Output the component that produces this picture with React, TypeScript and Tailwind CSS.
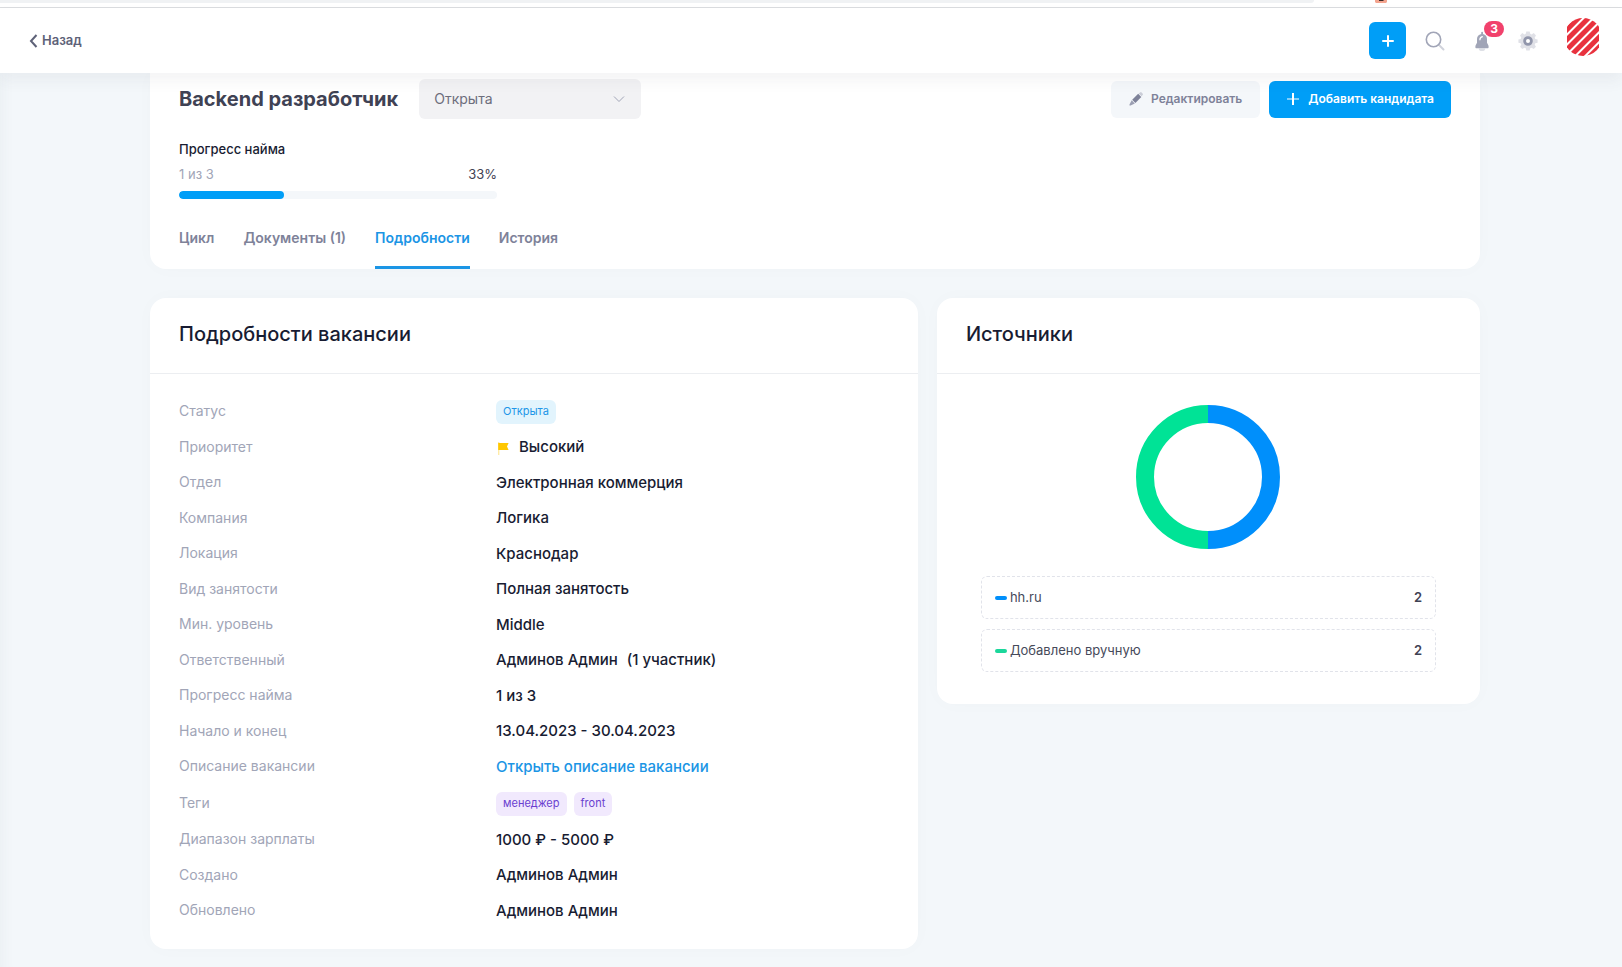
import React, { useState } from "react";

// Tabs of the vacancy page
const tabs = ["Цикл", "Документы (1)", "Подробности", "История"];

// Sources shown in the chart and its legend
const sources = [
  { name: "hh.ru", count: 2, dot: "bg-[#008ffb]" },
  { name: "Добавлено вручную", count: 2, dot: "bg-[#1bd79b]" },
];

// Rows of the details card, rows with badges are a bit taller
const details: { label: string; value: React.ReactNode; tall?: boolean }[] = [
  {
    label: "Статус",
    value: <Badge className="bg-[#e2f4fd] text-[#2196e8]">Открыта</Badge>,
    tall: true,
  },
  {
    label: "Приоритет",
    value: (
      <span className="flex items-center">
        <FlagIcon />
        <span className="ml-[9px]">Высокий</span>
      </span>
    ),
  },
  { label: "Отдел", value: "Электронная коммерция" },
  { label: "Компания", value: "Логика" },
  { label: "Локация", value: "Краснодар" },
  { label: "Вид занятости", value: "Полная занятость" },
  { label: "Мин. уровень", value: "Middle" },
  {
    label: "Ответственный",
    value: (
      <span className="flex gap-[9px]">
        <span>Админов Админ</span>
        <span>(1 участник)</span>
      </span>
    ),
  },
  { label: "Прогресс найма", value: "1 из 3" },
  { label: "Начало и конец", value: "13.04.2023 - 30.04.2023" },
  {
    label: "Описание вакансии",
    value: (
      <a href="#description" className="text-[#1b95e5] hover:underline">
        Открыть описание вакансии
      </a>
    ),
  },
  {
    label: "Теги",
    value: (
      <span className="flex gap-[7px]">
        <Badge className="bg-[#f1e9fd] text-[#6a3fd0]">менеджер</Badge>
        <Badge className="bg-[#f1e9fd] text-[#6a3fd0]">front</Badge>
      </span>
    ),
    tall: true,
  },
  { label: "Диапазон зарплаты", value: "1000 ₽ - 5000 ₽" },
  { label: "Создано", value: "Админов Админ" },
  { label: "Обновлено", value: "Админов Админ" },
];

function Badge({ className, children }: { className: string; children: React.ReactNode }) {
  return (
    <span className={`flex h-6 items-center rounded-md px-[7px] text-[11px] font-normal ${className}`}>
      {children}
    </span>
  );
}

function FlagIcon() {
  return (
    <svg width="14" height="16" viewBox="0 0 14 16" aria-hidden="true">
      <path d="M2 2h1.4v13H2z" fill="#ffc700" opacity="0.35" />
      <path d="M2.2 3H12.6L11 6.5l1.6 3.5H2.2z" fill="#ffc700" />
    </svg>
  );
}

function PencilIcon() {
  return (
    <svg width="14" height="14" viewBox="0 0 14 14" aria-hidden="true">
      <path d="M9.8 1.4 11 .4a1.2 1.2 0 0 1 1.6 0l1 1a1.2 1.2 0 0 1 0 1.6l-1 1.2z" fill="#7e8299" opacity="0.35" />
      <path d="M9.2 1.8 12.3 4.9 6.4 10.9 3.2 7.7z" fill="#7e8299" />
      <path d="M2.7 8.3 5.8 11.4 1.6 13.6H.5v-1z" fill="#7e8299" opacity="0.75" />
    </svg>
  );
}

function BellIcon() {
  return (
    <svg width="16" height="20" viewBox="0 0 16 20" aria-hidden="true">
      <path d="M4.8 17.4h6.4a3.2 2.6 0 0 1-6.4 0z" fill="#a1a5b7" opacity="0.35" />
      <path
        fillRule="evenodd"
        d="M7.2 1.6a.9.9 0 0 1 1.8 0v1.5c2.6.5 4 2.5 4 5v3.6l1.2 2.2c.3.5.4 1 .4 1.6v1c0 .4-.3.7-.7.7H2.1c-.4 0-.7-.3-.7-.7v-1c0-.6.1-1.1.4-1.6L3 11.700V8.100c0-2.500 1.600-4.500 4.200-5zM5.300 8.800c0 .9 1.300.9 1.300 0 0-1.400.7-2.200 1.800-2.400.9-.2.7-1.500-.2-1.400-1.800.3-2.900 1.700-2.900 3.800z"
        fill="#a1a5b7"
      />
    </svg>
  );
}

function GearIcon() {
  return (
    <svg width="20" height="20" viewBox="0 0 20 20" aria-hidden="true">
      <path
        d="M8.300.5h3.400l.5 2.300 1.500.6 2-1.300 2.300 2.300-1.300 2 .6 1.500 2.300.5v3.300l-2.300.5-.6 1.500 1.300 2-2.300 2.300-2-1.300-1.500.6-.5 2.300H8.300l-.5-2.300-1.500-.6-2 1.300L2 15.700l1.300-2-.6-1.500-2.300-.5V8.400l2.300-.5.6-1.500-1.300-2 2.300-2.300 2 1.300 1.500-.6z"
        fill="#a1a5b7"
        opacity="0.33"
      />
      <circle cx="10" cy="10" r="3.400" fill="#fff" stroke="#9196ab" strokeWidth="2.800" />
    </svg>
  );
}

function Avatar() {
  return (
    <svg width="32" height="38" viewBox="0 0 32 38" role="img" aria-label="Профиль">
      <defs>
        <clipPath id="avatar">
          <circle cx="16" cy="19" r="19" />
        </clipPath>
        <pattern id="stripes" width="7" height="7" patternUnits="userSpaceOnUse" patternTransform="rotate(-45 16 19)">
          <rect width="7" height="5" fill="#e8323e" />
        </pattern>
      </defs>
      <rect width="32" height="38" fill="url(#stripes)" clipPath="url(#avatar)" />
    </svg>
  );
}

function Donut() {
  return (
    <svg width="144" height="144" viewBox="0 0 144 144" role="img" aria-label="Источники кандидатов">
      <path d="M72 9a63 63 0 0 1 0 126" fill="none" stroke="#008ffb" strokeWidth="18" />
      <path d="M72 135a63 63 0 0 1 0-126" fill="none" stroke="#00e396" strokeWidth="18" />
    </svg>
  );
}

export default function App() {
  const [active, setActive] = useState("Подробности");

  return (
    <div className="flex min-h-screen flex-col bg-[#f3f7fa] font-[Inter,sans-serif] text-[#181c32] shadow-[inset_14px_0_14px_-12px_rgba(60,70,90,0.05)]">
      {/* Browser edge */}
      <div className="flex h-2 items-start border-b border-[#dadcdf] bg-white">
        <div className="h-[3px] w-[81%] rounded-br-full bg-[#f0f2f4]" />
        <svg className="ml-[61px]" width="12" height="3" viewBox="0 0 12 3" aria-hidden="true">
          <path d="M0 0h12v2l-1 1H1L0 2z" fill="#f3a48f" />
          <path d="M4 0h5L8 1H4z" fill="#3a2a28" />
        </svg>
      </div>

      {/* Top bar */}
      <header className="relative z-10 flex h-[65px] items-center justify-between bg-white pr-[23px] pl-[29px] shadow-[0_8px_14px_rgba(60,70,90,0.06)]">
        <a href="#back" className="flex items-center gap-1 text-[13px] font-semibold text-[#5e6278]">
          <svg width="9" height="14" viewBox="0 0 9 14" fill="none" stroke="#5e6278" strokeWidth="2" aria-hidden="true">
            <path d="M7.500 1 2 7l5.500 6" />
          </svg>
          Назад
        </a>

        <div className="flex items-center">
          <button aria-label="Создать" className="flex size-[37px] items-center justify-center rounded-md bg-[#009ef7]">
            <svg width="12" height="12" viewBox="0 0 12 12" stroke="#fff" strokeWidth="2" strokeLinecap="round">
              <path d="M6 1v10M1 6h10" />
            </svg>
          </button>
          <button aria-label="Поиск" className="ml-[19px]">
            <svg width="20" height="20" viewBox="0 0 20 20" fill="none">
              <path d="m14 14 4.500 4.500" stroke="#d0d2db" strokeWidth="2" strokeLinecap="round" />
              <circle cx="8.500" cy="8.500" r="7.200" stroke="#a1a5b7" strokeWidth="1.600" />
            </svg>
          </button>
          <button aria-label="Уведомления" className="relative ml-[29px]">
            <BellIcon />
            <span className="absolute -top-[10px] left-[10px] flex h-4 w-5 items-center justify-center rounded-full bg-[#f1416c] text-xs font-bold text-white">
              3
            </span>
          </button>
          <button aria-label="Настройки" className="ml-7">
            <GearIcon />
          </button>
          <button aria-label="Профиль" className="mb-2 ml-[29px]">
            <Avatar />
          </button>
        </div>
      </header>

      <main className="pr-[142px] pb-[18px] pl-[150px]">
        {/* Vacancy header */}
        <section className="rounded-b-2xl bg-white px-[29px] pt-1.5 shadow-[0_0_20px_rgba(76,87,125,0.02)]">
          <div className="flex items-center justify-between">
            <div className="flex items-center gap-[21px]">
              <h1 className="text-xl font-bold text-[#3f4254]">Backend разработчик</h1>
              <div className="relative">
                <select
                  aria-label="Статус вакансии"
                  className="h-10 w-[222px] appearance-none rounded-md bg-[#f2f2f4] px-[15px] text-sm text-[#6d6e7c]"
                >
                  <option>Открыта</option>
                  <option>Закрыта</option>
                </select>
                <svg
                  className="pointer-events-none absolute top-4 right-4 text-[#a1a5b7]"
                  width="12"
                  height="8"
                  viewBox="0 0 12 8"
                  fill="none"
                  stroke="currentColor"
                  aria-hidden="true"
                >
                  <path d="m1 1.500 5 5 5-5" />
                </svg>
              </div>
            </div>
            <div className="flex gap-[9px]">
              <button className="flex h-[37px] items-center gap-2 rounded-md bg-[#f4f7fa] px-[18px] text-xs font-semibold text-[#7e8299]">
                <PencilIcon />
                Редактировать
              </button>
              <button className="flex h-[37px] items-center gap-2 rounded-md bg-[#009ef7] px-[17px] text-xs font-semibold text-white">
                <svg width="14" height="14" viewBox="0 0 14 14" aria-hidden="true">
                  <path d="M1 6h12v2H1z" fill="#fff" opacity="0.5" />
                  <path d="M6 1h2v12H6z" fill="#fff" />
                </svg>
                Добавить кандидата
              </button>
            </div>
          </div>

          {/* Hiring progress */}
          <div className="mt-5 w-[318px]">
            <p className="text-[13px] leading-5 font-medium">Прогресс найма</p>
            <div className="mt-[5px] flex justify-between text-[13px] leading-5">
              <span className="text-[#a1a5b7]">1 из 3</span>
              <span className="text-[#3f4254]">33%</span>
            </div>
            <div className="mt-[7px] h-2 overflow-hidden rounded-full bg-[#f4f7fa]">
              <div className="h-full w-[33%] rounded-full bg-[#009ef7]" />
            </div>
          </div>

          <nav className="mt-2 flex gap-[29px]">
            {tabs.map((tab) => (
              <button
                key={tab}
                onClick={() => setActive(tab)}
                className={`h-[62px] border-y-[3px] border-t-transparent text-sm font-semibold ${
                  tab === active ? "border-b-[#1b95e5] text-[#1b95e5]" : "border-b-transparent text-[#7e8299]"
                }`}
              >
                {tab}
              </button>
            ))}
          </nav>
        </section>

        <div className="mt-[29px] grid grid-cols-12 items-start gap-[19px]">
          {/* Details */}
          <section className="col-span-7 rounded-2xl bg-white shadow-[0_0_20px_rgba(76,87,125,0.02)]">
            <h2 className="flex h-[76px] items-center border-b border-[#eceef1] px-[29px] pb-[3px] text-xl font-medium">
              Подробности вакансии
            </h2>
            <dl className="px-[29px] pt-[18px] pb-[21px]">
              {details.map((row) => (
                <div
                  key={row.label}
                  className={`flex items-center ${row.tall ? "h-[37px]" : "h-9 even:h-[35px]"}`}
                >
                  <dt className="w-[317px] text-sm text-[#a1a5b7]">{row.label}</dt>
                  <dd className="pt-0.5 text-[15px] font-medium">{row.value}</dd>
                </div>
              ))}
            </dl>
          </section>

          {/* Sources */}
          <section className="col-span-5 rounded-2xl bg-white shadow-[0_0_20px_rgba(76,87,125,0.02)]">
            <h2 className="flex h-[76px] items-center border-b border-[#eceef1] px-[29px] pb-[3px] text-xl font-medium">
              Источники
            </h2>
            <div className="flex flex-col items-center px-[44px] pt-[31px] pb-8">
              <Donut />
              <ul className="mt-[27px] flex w-full flex-col gap-2.5">
                {sources.map((source) => (
                  <li
                    key={source.name}
                    className="flex h-[43px] items-center rounded-md border border-dashed border-[#e1e3ea] px-[13px] text-[13px] text-[#464a5a]"
                  >
                    <span className={`h-1 w-3 rounded-full ${source.dot}`} />
                    <span className="ml-[3px]">{source.name}</span>
                    <span className="ml-auto font-semibold text-[#3f4254]">{source.count}</span>
                  </li>
                ))}
              </ul>
            </div>
          </section>
        </div>
      </main>
    </div>
  );
}
